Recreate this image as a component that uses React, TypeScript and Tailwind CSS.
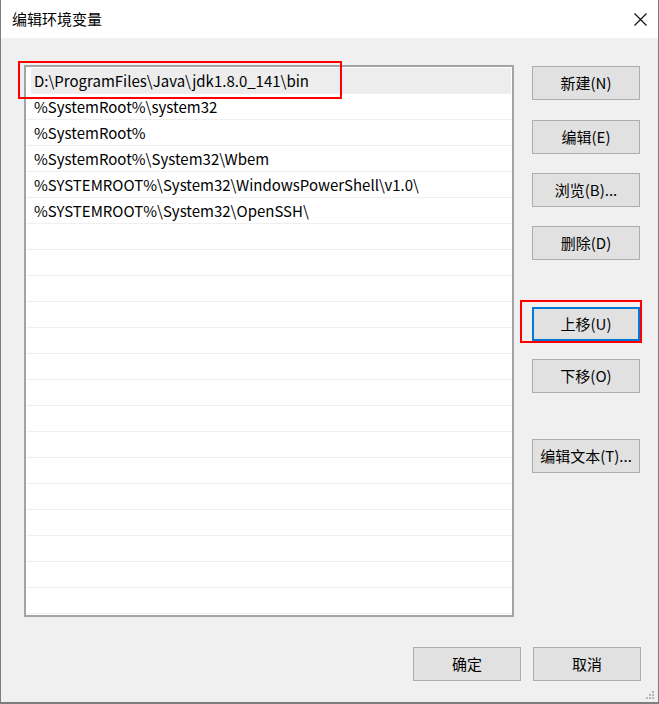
import React from "react";

const font = {
  fontFamily: '"Noto Sans CJK SC", "Noto Sans", sans-serif',
};

const paths = [
  "D:\\ProgramFiles\\Java\\jdk1.8.0_141\\bin",
  "%SystemRoot%\\system32",
  "%SystemRoot%",
  "%SystemRoot%\\System32\\Wbem",
  "%SYSTEMROOT%\\System32\\WindowsPowerShell\\v1.0\\",
  "%SYSTEMROOT%\\System32\\OpenSSH\\",
];

const rows = [...paths, ...Array(15).fill("")];

function Btn({ label, active = false }: { label: string; active?: boolean }) {
  return (
    <button
      className={`h-[34px] w-[108px] shrink-0 bg-[#e1e1e1] text-[15px] text-black ${
        active ? "border-2 border-[#0078d7]" : "border border-[#adadad]"
      }`}
    >
      {label}
    </button>
  );
}

export default function App() {
  return (
    <div
      style={font}
      className="relative flex h-[704px] w-[659px] flex-col border-x border-b-2 border-[#7d7d7d] bg-[#f0f0f0] text-black"
    >
      {/* Title bar */}
      <div className="flex h-[38px] shrink-0 items-center justify-between bg-white pl-[11px] pr-[11px]">
        <span className="text-[15px]">编辑环境变量</span>
        <svg width="13" height="13" viewBox="0 0 13 13">
          <path d="M0.5 0.5 L12.5 12.5 M12.5 0.5 L0.5 12.5" stroke="#111" strokeWidth="1.2" />
        </svg>
      </div>

      {/* Body */}
      <div className="flex pl-[23px] pt-[27px]">
        <div className="h-[552px] w-[490px] overflow-hidden border-2 border-[#a3a3a8] bg-white pt-px">
          {rows.map((p, i) => (
            <div
              key={i}
              className={`flex h-[26px] items-center border-b border-[#efefef] text-[15px] leading-none ${
                i === 0 ? "ml-[5px] mr-px bg-[#ededed] pl-[3px]" : "pl-[8px]"
              }`}
            >
              {p}
            </div>
          ))}
        </div>

        <div className="ml-[18px] flex flex-col pt-px">
          <Btn label="新建(N)" />
          <div className="h-[20px]" />
          <Btn label="编辑(E)" />
          <div className="h-[19px]" />
          <Btn label="浏览(B)..." />
          <div className="h-[19px]" />
          <Btn label="删除(D)" />
          <div className="h-[47px]" />
          <Btn label="上移(U)" active />
          <div className="h-[18px]" />
          <Btn label="下移(O)" />
          <div className="h-[46px]" />
          <Btn label="编辑文本(T)..." />
        </div>
      </div>

      {/* Footer buttons */}
      <div className="mt-[30px] flex justify-end gap-[12px] pr-[17px]">
        <Btn label="确定" />
        <Btn label="取消" />
      </div>

      {/* Resize grip */}
      <svg className="absolute bottom-[3px] right-[4px]" width="9" height="9" viewBox="0 0 9 9">
        {[
          [7, 1],
          [4, 4],
          [7, 4],
          [1, 7],
          [4, 7],
          [7, 7],
        ].map(([x, y], i) => (
          <rect key={i} x={x} y={y} width="2" height="2" fill="#b5b5b5" />
        ))}
      </svg>

      {/* Red annotation boxes */}
      <div className="pointer-events-none absolute left-[17px] top-[61px] h-[38px] w-[324px] border-2 border-[#ff0000]" />
      <div className="pointer-events-none absolute left-[519px] top-[300px] h-[43px] w-[122px] border-2 border-[#ff0000]" />
    </div>
  );
}
